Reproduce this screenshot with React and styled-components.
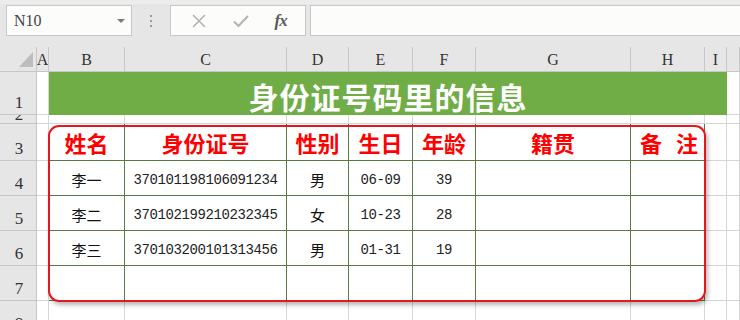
import React from "react";
import styled, { createGlobalStyle } from "styled-components";

const GlobalStyle = createGlobalStyle`
  html, body { margin: 0; padding: 0; background: #ffffff; overflow: hidden; }
  body { font-family: "Noto Sans CJK SC", "Liberation Sans", sans-serif; }
  * { box-sizing: border-box; }
`;

const Page = styled.div`
  width: 740px;
  height: 320px;
  overflow: hidden;
  display: flex;
  flex-direction: column;
`;

const Toolbar = styled.div`
  height: 47px;
  flex: none;
  background: #e6e6e6;
  border-top: 4px solid #ececec;
  display: flex;
  align-items: flex-start;
  padding: 1px 0 0 6px;
`;

const NameBox = styled.div`
  width: 126px;
  height: 31px;
  background: #fcfcfa;
  border: 1px solid #c8c8c8;
  display: flex;
  align-items: center;
  justify-content: space-between;
  padding: 0 6px 0 7px;
  font-family: "Liberation Serif", serif;
  font-size: 16px;
  color: #444;
`;

const Caret = styled.span`
  width: 0;
  height: 0;
  border-left: 4px solid transparent;
  border-right: 4px solid transparent;
  border-top: 4px solid #7a7a7a;
`;

const Grip = styled.div`
  width: 38px;
  height: 31px;
  display: flex;
  flex-direction: column;
  align-items: center;
  justify-content: center;
  gap: 3px;
`;

const Dot = styled.span`
  width: 2px;
  height: 2px;
  background: #9a9a9a;
`;

const FuncBox = styled.div`
  width: 136px;
  height: 31px;
  background: #fcfcfa;
  border: 1px solid #c8c8c8;
  display: flex;
  align-items: center;
  justify-content: space-around;
  padding: 0 6px 0 8px;
`;

const Fx = styled.span`
  font-family: "Liberation Serif", serif;
  font-style: italic;
  font-weight: bold;
  font-size: 17px;
  color: #5a5a5a;
  letter-spacing: -1px;
`;

const FormulaInput = styled.div`
  flex: 1;
  height: 31px;
  margin-left: 4px;
  background: #fcfcfa;
  border-top: 1px solid #c8c8c8;
  border-bottom: 1px solid #c8c8c8;
  border-left: 1px solid #c8c8c8;
`;

const Sheet = styled.div`
  position: relative;
  display: grid;
  grid-template-columns: 37px 12px 76px 162px 62px 64px 63px 155px 74px 22px 1fr;
  grid-template-rows: 25px 43px 9px 37px 35px 35px 35px 35px 35px;
  background: #ffffff;
`;

const HeaderBase = styled.div`
  background: #e6e6e6;
  border-right: 1px solid #c6c6c6;
  border-bottom: 1px solid #c6c6c6;
  font-family: "Liberation Serif", serif;
  color: #333;
  overflow: hidden;
  display: flex;
  justify-content: center;
`;

const Corner = styled(HeaderBase)`
  align-items: stretch;
  padding: 5px 3px 3px 0;
  justify-content: flex-end;
`;

const ColHeader = styled(HeaderBase)`
  align-items: center;
  font-size: 16px;
  padding-top: 2px;
`;

const RowHeader = styled(HeaderBase)`
  align-items: flex-end;
  font-size: 17px;
  line-height: 17px;
  padding-bottom: ${(p) => (p.$tiny ? "0" : "3px")};
  padding-left: 2px;
`;

const Cell = styled.div`
  border-right: 1px solid ${(p) => (p.$olive ? "#5c7741" : "#d6d6d6")};
  border-bottom: 1px solid ${(p) => (p.$olive ? "#5c7741" : "#d6d6d6")};
  display: flex;
  align-items: center;
  justify-content: center;
  padding-top: ${(p) => (p.$head ? "0" : "3px")};
  color: ${(p) => (p.$head ? "#ff0000" : "#111")};
  font-weight: ${(p) => (p.$head ? "bold" : "normal")};
  font-size: ${(p) => (p.$head ? "22px" : "15px")};
  white-space: pre;
  overflow: hidden;
`;

const Mono = styled.span`
  font-family: "Liberation Mono", monospace;
  font-size: 14px;
  letter-spacing: -0.4px;
  color: #222;
`;

const Spaced = styled.span`
  word-spacing: 9px;
  padding-left: 3px;
`;

const TitleCell = styled.div`
  grid-column: span 8;
  background: #70ad47;
  color: #ffffff;
  font-weight: bold;
  font-size: 30px;
  letter-spacing: 1px;
  display: flex;
  align-items: center;
  justify-content: center;
  padding-top: 4px;
  line-height: 1;
`;

const Frame = styled.div`
  position: absolute;
  left: 48px;
  top: 78px;
  width: 658px;
  height: 177px;
  border: 2.5px solid #e11820;
  border-radius: 11px;
  box-shadow: 2px 3px 4px rgba(0, 0, 0, 0.28);
  pointer-events: none;
`;

const COLS = ["A", "B", "C", "D", "E", "F", "G", "H", "I", ""];

const HEADS = ["姓名", "身份证号", "性别", "生日", "年龄", "籍贯", "备 注"];
const DATA = [
  ["李一", "370101198106091234", "男", "06-09", "39", "", ""],
  ["李二", "370102199210232345", "女", "10-23", "28", "", ""],
  ["李三", "370103200101313456", "男", "01-31", "19", "", ""],
  ["", "", "", "", "", "", ""],
];

const isMono = (s) => /^[0-9-]+$/.test(s);

function TableRow({ n, values, head }) {
  return (
    <>
      <RowHeader>{n}</RowHeader>
      <Cell $olive={false} />
      {values.map((v, i) => (
        <Cell key={i} $olive $head={head}>
          {head && v.includes(" ") ? (
            <Spaced>{v}</Spaced>
          ) : v && isMono(v) ? (
            <Mono>{v}</Mono>
          ) : (
            v
          )}
        </Cell>
      ))}
      <Cell />
      <Cell />
    </>
  );
}

function PlainRow({ n, tiny }) {
  return (
    <>
      <RowHeader $tiny={tiny}>{n}</RowHeader>
      {COLS.map((c, i) => (
        <Cell key={i} />
      ))}
    </>
  );
}

export default function App() {
  return (
    <Page>
      <GlobalStyle />
      <Toolbar>
        <NameBox>
          <span>N10</span>
          <Caret />
        </NameBox>
        <Grip>
          <Dot />
          <Dot />
          <Dot />
        </Grip>
        <FuncBox>
          <svg width="16" height="16" viewBox="0 0 16 16">
            <path d="M2 2 L14 14 M14 2 L2 14" stroke="#b4b4b4" strokeWidth="1.6" fill="none" />
          </svg>
          <svg width="18" height="16" viewBox="0 0 18 16">
            <path d="M2 8.5 L6.5 13 L16 3" stroke="#b4b4b4" strokeWidth="2" fill="none" />
          </svg>
          <Fx>fx</Fx>
        </FuncBox>
        <FormulaInput />
      </Toolbar>
      <Sheet>
        <Corner>
          <svg width="14" height="15" viewBox="0 0 14 15">
            <polygon points="14,0 14,15 0,15" fill="#bdbdbd" />
          </svg>
        </Corner>
        {COLS.map((c, i) => (
          <ColHeader key={i}>{c}</ColHeader>
        ))}

        <RowHeader>1</RowHeader>
        <Cell />
        <TitleCell>身份证号码里的信息</TitleCell>
        <Cell />

        <PlainRow n="2" tiny />
        <TableRow n="3" values={HEADS} head />
        {DATA.map((r, i) => (
          <TableRow key={i} n={String(4 + i)} values={r} />
        ))}
        <PlainRow n="8" />
        <Frame />
      </Sheet>
    </Page>
  );
}
